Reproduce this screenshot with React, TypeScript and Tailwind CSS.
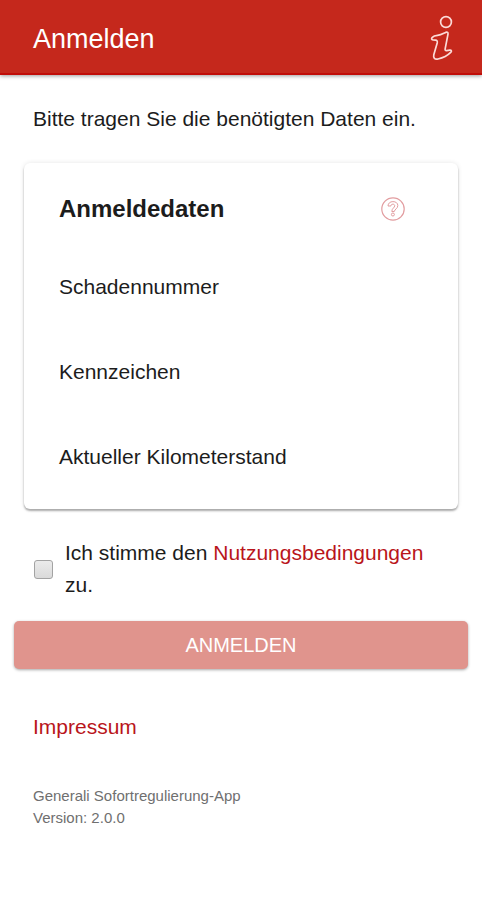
import { useState } from 'react';

const fields = [
  { id: 'schadennummer', label: 'Schadennummer' },
  { id: 'kennzeichen', label: 'Kennzeichen' },
  { id: 'kilometerstand', label: 'Aktueller Kilometerstand' },
];

const InfoIcon = () => (
  <svg
    className="h-12 w-7"
    viewBox="0 0 28 48"
    fill="none"
    stroke="#fbdad7"
    strokeWidth="1.7"
    strokeLinejoin="round"
    strokeLinecap="round"
  >
    <circle cx="18" cy="7" r="5.400" />
    <path d="M4.300 22.300c1.400-1.400 3.200-1.700 5.200-1.900 3.200-.3 5.500-1.700 8.200-3 1.700-.7 2.600 0 2.300 1.700l-2.800 14.600c-.3 1.600.1 2 1.500 1.900l3-.4c1.800-.2 2.300.9 1 2.200-2.900 2.900-8 5.500-12.700 6.600-3.300.7-4.900-1.100-4.200-4.200l3.400-11.800c.4-1.900-.2-2.800-1.700-2.900l-2.500-.2c-1.500-.2-1.900-1.400-.7-2.600z" />
  </svg>
);

const HelpIcon = () => (
  <svg className="size-6" viewBox="0 0 24 24" fill="none" stroke="#e29da0" strokeLinejoin="round">
    <circle cx="12" cy="12" r="11.200" strokeWidth="1.200" />
    <path
      d="M7 9c.1-2.700 2.100-4.400 4.900-4.400 2.900 0 4.900 1.500 4.900 3.900 0 3.300-3.200 3.600-3.500 6h-2.500c.1-3.400 2.900-3.700 2.900-5.700 0-1-.7-1.600-1.800-1.600-1.300 0-1.900.7-2 1.800z"
      strokeWidth="1"
    />
    <circle cx="11.900" cy="17.500" r="1.500" strokeWidth="1" />
  </svg>
);

const Header = () => (
  <header className="flex h-[75px] items-center justify-between border-b-2 border-[#c00d08] bg-[#c5281c] pt-1 pr-[26px] pl-[33px] shadow-[0_1px_4px_rgba(0,0,0,0.4)]">
    <h1 className="text-[27px] leading-8 text-white">Anmelden</h1>
    <button type="button" aria-label="Information">
      <InfoIcon />
    </button>
  </header>
);

const LoginCard = () => (
  <section className="mx-6 mt-7 rounded-md bg-white px-[35px] pt-[30px] pb-2 shadow-[0_2px_2px_rgba(0,0,0,0.3),0_0_5px_rgba(0,0,0,0.1)]">
    <div className="flex items-center justify-between pr-[18px]">
      <h2 className="text-2xl leading-8 font-bold">Anmeldedaten</h2>
      <button type="button" aria-label="Hilfe">
        <HelpIcon />
      </button>
    </div>
    <div className="mt-[46px] flex flex-col gap-[25px]">
      {fields.map((field) => (
        <div key={field.id} className="flex flex-col">
          <label htmlFor={field.id}>{field.label}</label>
          <input id={field.id} type="text" className="h-7 w-full bg-transparent outline-none" />
        </div>
      ))}
    </div>
  </section>
);

const App = () => {
  const [accepted, setAccepted] = useState(false);

  return (
    <div className="min-h-screen bg-white font-['Liberation_Sans',Arial,sans-serif] text-[21px] leading-8 text-[#1c1c1c]">
      <Header />
      <main>
        <p className="mt-7 px-[33px]">Bitte tragen Sie die benötigten Daten ein.</p>
        <LoginCard />
        <form onSubmit={(event) => event.preventDefault()}>
          <div className="mt-7 flex items-center gap-3 pr-8 pl-[34px]">
            <input
              id="terms"
              type="checkbox"
              checked={accepted}
              onChange={(event) => setAccepted(event.target.checked)}
              className="size-[19px] shrink-0 appearance-none rounded-[3px] border border-[#a3a3a3] bg-linear-to-b from-[#ebebeb] to-[#dadada] checked:from-[#c5281c] checked:to-[#c5281c]"
            />
            <label htmlFor="terms">
              Ich stimme den{' '}
              <a href="#nutzungsbedingungen" className="text-[#b9151b]">
                Nutzungsbedingungen
              </a>{' '}
              zu.
            </label>
          </div>
          <div className="mt-5 px-3.5">
            <button
              type="submit"
              className="h-12 w-full rounded-[5px] bg-[#e0948d] text-xl text-white uppercase shadow-[0_1px_3px_rgba(0,0,0,0.35)]"
            >
              Anmelden
            </button>
          </div>
        </form>
      </main>
      <footer className="mt-[42px] px-[33px]">
        <a href="#impressum" className="text-[#b9151b]">
          Impressum
        </a>
        <p className="mt-[42px] text-[15px] leading-[22px] text-[#6f6f6f]">
          Generali Sofortregulierung-App
          <br />
          Version: 2.0.0
        </p>
      </footer>
    </div>
  );
};

export default App;
